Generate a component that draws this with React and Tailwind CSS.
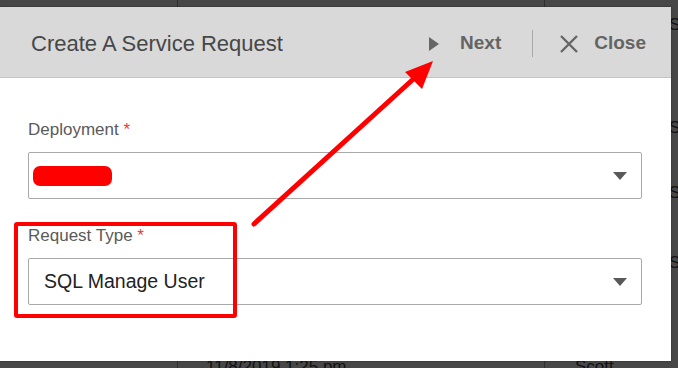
import React from "react";

function Caret() {
  return (
    <svg width="16" height="10" viewBox="0 0 16 10" className="shrink-0">
      <polygon points="1,1 15,1 8,9" fill="#595959" />
    </svg>
  );
}

function Field({ label, children }) {
  return (
    <div className="flex flex-col">
      <div className="h-[22px] text-[17px] leading-[22px] text-[#5a5a5a]">
        {label} <span className="text-[#e23b3b]">*</span>
      </div>
      <div className="mt-[11px] h-[47px] w-[614px] rounded-[2px] border border-[#a9a9a9] bg-white flex items-center justify-between pl-[3px] pr-[13px]">
        <div className="flex items-center">{children}</div>
        <Caret />
      </div>
    </div>
  );
}

export default function App() {
  return (
    <div
      className="relative w-[678px] h-[368px] overflow-hidden bg-[#474747]"
      style={{ fontFamily: '"Liberation Sans", Arial, sans-serif' }}
    >
      {/* background table */}
      <div className="absolute inset-0 grid grid-cols-[178px_367px_133px] text-[17px] text-[#1a1a1a]">
        <div className="border-r border-[#2e2e2e]" />
        <div className="border-r border-[#2e2e2e] relative">
          <span className="absolute left-[28px] top-[354px] text-[#111]">11/8/2019 1:25 pm</span>
        </div>
        <div className="relative">
          <span className="absolute left-[30px] top-[354px] text-[#111]">Scott Jackson</span>
          <span className="absolute left-[124px] top-[12px] text-[#111]">Sc</span>
          <span className="absolute left-[124px] top-[115px] text-[#111]">Sc</span>
          <span className="absolute left-[124px] top-[180px] text-[#111]">Sc</span>
          <span className="absolute left-[124px] top-[250px] text-[#111]">Sc</span>
        </div>
      </div>

      {/* modal */}
      <div className="absolute left-0 top-[7px] w-[671px] h-[354px] bg-white flex flex-col shadow-[0_0_2px_rgba(0,0,0,0.4)]">
        <div className="h-[71px] bg-[#d9d9d9] border-b border-[#c4c4c4] flex items-center pl-[31px] pr-[25px]">
          <div className="text-[22px] text-[#474747] flex-1 mt-[2px]">Create A Service Request</div>
          <div className="flex items-center font-bold text-[19px] text-[#646464] mt-[3px]">
            <svg width="12" height="16" viewBox="0 0 12 16" className="mr-[20px]">
              <polygon points="1,1 11,8 1,15" fill="#666" />
            </svg>
            <span>Next</span>
            <div className="ml-[31px] mr-[26px] w-[1px] h-[27px] bg-[#a8a8a8]" />
            <svg width="20" height="20" viewBox="0 0 20 20" className="mr-[15px]">
              <path d="M2 2 L18 18 M18 2 L2 18" stroke="#666" strokeWidth="2.4" fill="none" />
            </svg>
            <span>Close</span>
          </div>
        </div>
        <div className="pl-[28px] pt-[41px] flex flex-col gap-[26px]">
          <Field label="Deployment">
            <div className="ml-[1px] w-[79px] h-[20px] rounded-[7px] bg-[#ff0000]" />
          </Field>
          <Field label="Request Type">
            <span className="ml-[12px] text-[19.5px] text-[#222]">SQL Manage User</span>
          </Field>
        </div>
      </div>

      {/* annotations */}
      <div className="absolute left-[14px] top-[222px] w-[223px] h-[96px] border-[4px] border-[#ff0000] rounded-[3px]" />
      <svg className="absolute left-0 top-0" width="678" height="368" viewBox="0 0 678 368">
        <line x1="254" y1="224" x2="420" y2="73" stroke="#ff0000" strokeWidth="5" strokeLinecap="round" />
        <polygon points="433,61 405,72 422,89" fill="#ff0000" />
      </svg>
    </div>
  );
}
